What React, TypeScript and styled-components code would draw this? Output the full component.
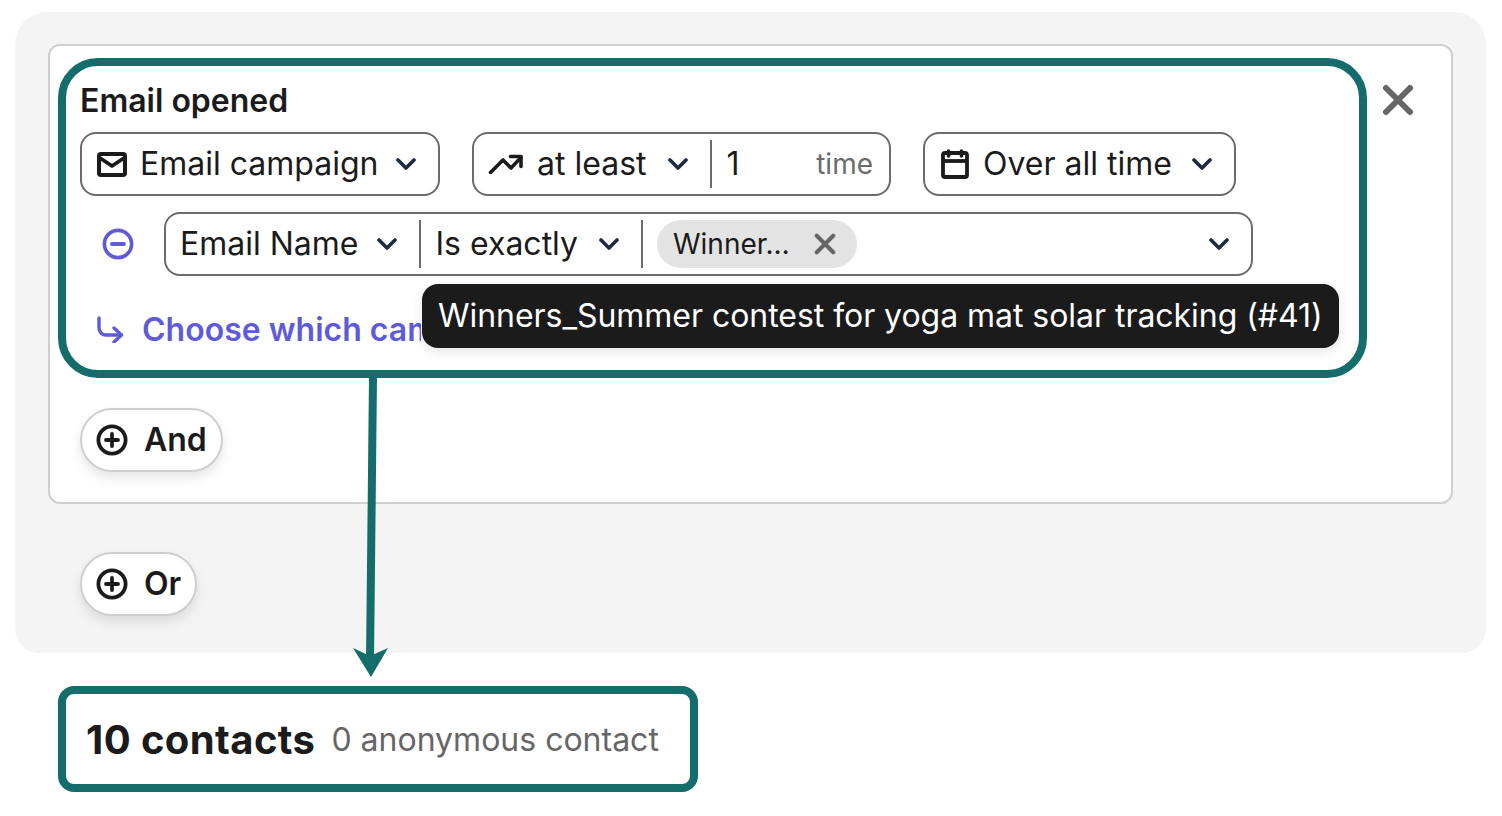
import React from 'react';
import styled, {createGlobalStyle} from 'styled-components';

const teal = '#146c6b';
const ink = '#1b1b1b';
const violet = '#5f5bd6';
const line = '#6b6b6b';
const navy = '#1c2b3f';

const GlobalStyle = createGlobalStyle`
  html, body {
    margin: 0;
    padding: 0;
    background: #fff;
  }
  body {
    font-family: Inter, "Liberation Sans", sans-serif;
    color: ${ink};
  }
`;

const Page = styled.div`
  position: relative;
  width: 1502px;
  height: 816px;
  padding: 12px 16px 0 15px;
  box-sizing: border-box;
  overflow: hidden;
`;

const Panel = styled.div`
  height: 641px;
  box-sizing: border-box;
  padding: 32px 33px 0;
  background: #f4f4f4;
  border-radius: 32px 32px 24px 24px;
`;

const Card = styled.div`
  position: relative;
  height: 460px;
  box-sizing: border-box;
  padding: 35px 30px 0;
  background: #fff;
  border: 2px solid #cfcfcf;
  border-radius: 12px;
`;

const Highlight = styled.div`
  position: absolute;
  left: 8px;
  top: 12px;
  width: 1309px;
  height: 320px;
  box-sizing: border-box;
  border: 8px solid ${teal};
  border-radius: 40px;
  pointer-events: none;
`;

const CloseButton = styled.div`
  position: absolute;
  left: 1332px;
  top: 38px;
  display: flex;
`;

const Title = styled.div`
  font-size: 32px;
  line-height: 40px;
  font-weight: 600;
`;

const Row = styled.div`
  display: flex;
  gap: 32px;
  margin-top: 11px;
`;

const FilterRow = styled.div`
  display: flex;
  align-items: center;
  margin-top: 16px;
  padding-left: 22px;
  gap: 30px;
`;

const Field = styled.div<{$width: number}>`
  display: flex;
  align-items: center;
  width: ${({$width}) => $width}px;
  height: 64px;
  box-sizing: border-box;
  padding: 0 14px;
  gap: 12px;
  background: #fff;
  border: 2px solid ${line};
  border-radius: 16px;
  font-size: 32px;
`;

const Label = styled.span<{$pad: number}>`
  margin-right: ${({$pad}) => $pad}px;
  padding-bottom: 2px;
  white-space: nowrap;
`;

const Divider = styled.span<{$after: number}>`
  flex: none;
  width: 2px;
  height: 48px;
  background: ${line};
  margin: 0 ${({$after}) => $after}px 0 10px;
`;

const Count = styled.span`
  flex: 1;
  padding-bottom: 2px;
`;

const Unit = styled.span`
  font-size: 28px;
  color: #6b6b6b;
  margin-right: 2px;
`;

const Chip = styled.span`
  display: flex;
  align-items: center;
  justify-content: space-between;
  width: 200px;
  height: 48px;
  box-sizing: border-box;
  padding: 0 21px 0 16px;
  background: #e3e3e3;
  border-radius: 24px;
  font-size: 28px;
  margin-left: 2px;
`;

const Spacer = styled.span`
  flex: 1;
`;

const LinkRow = styled.div`
  display: flex;
  align-items: center;
  gap: 18px;
  margin-top: 33px;
  padding-left: 16px;
  height: 40px;
  color: ${violet};
  font-size: 32px;
  font-weight: 600;
  white-space: nowrap;
`;

const LinkText = styled.span`
  width: 279px;
  overflow: hidden;
`;

const Tooltip = styled.div`
  position: absolute;
  left: 372px;
  top: 238px;
  display: flex;
  align-items: center;
  height: 64px;
  box-sizing: border-box;
  padding: 0 16px 1px;
  width: 917px;
  background: ${ink};
  color: #fff;
  border-radius: 16px;
  font-size: 32px;
  letter-spacing: -0.04px;
  white-space: nowrap;
  box-shadow: 0 4px 12px rgba(0, 0, 0, 0.1);
`;

const PillButton = styled.div`
  display: inline-flex;
  align-items: center;
  gap: 16px;
  height: 64px;
  box-sizing: border-box;
  padding: 0 14px;
  background: #fff;
  border: 2px solid #cfcfcf;
  border-radius: 32px;
  font-size: 32px;
  font-weight: 600;
  box-shadow: 0 6px 12px rgba(0, 0, 0, 0.1);
`;

const PillLabel = styled.span`
  padding-bottom: 2px;
`;

const AndButton = styled(PillButton)`
  margin-top: 59px;
`;

const OrButton = styled(PillButton)`
  margin: 48px 0 0 32px;
`;

const ContactsBox = styled.div`
  display: flex;
  align-items: center;
  width: 640px;
  height: 106px;
  box-sizing: border-box;
  margin: 33px 0 0 43px;
  padding: 0 20px;
  gap: 16px;
  background: #fff;
  border: 8px solid ${teal};
  border-radius: 16px;
  white-space: nowrap;
`;

const ContactCount = styled.span`
  font-size: 40px;
  font-weight: 700;
  letter-spacing: 0.4px;
`;

const Anonymous = styled.span`
  font-size: 32px;
  color: #666;
`;

const Connector = styled.svg`
  position: absolute;
  left: 340px;
  top: 370px;
`;

const ChevronMark = styled.svg<{$end?: number}>`
  flex: none;
  margin-right: ${({$end}) => $end ?? 0}px;
`;

const Chevron = ({end}: {end?: number}) => (
  <ChevronMark $end={end} width="20" height="12" viewBox="0 0 20 12" fill="none">
    <path d="M2 2l8 8 8-8" stroke={navy} strokeWidth="3.6" strokeLinecap="round" strokeLinejoin="round" />
  </ChevronMark>
);

const MailIcon = () => (
  <svg width="32" height="25" viewBox="-1 0 32 25" fill="none" style={{flex: 'none'}}>
    <rect x="2" y="2" width="26" height="21" rx="2" stroke={ink} strokeWidth="4" />
    <path d="M3 6l12 8 12-8" stroke={ink} strokeWidth="3.8" strokeLinejoin="round" />
  </svg>
);

const TrendIcon = () => (
  <svg width="37" height="20" viewBox="-1 0 37 20" fill="none" style={{flex: 'none'}}>
    <path d="M1.5 18.5L14 6l8 8L32 3.5" stroke={ink} strokeWidth="3.6" strokeLinecap="round" strokeLinejoin="round" />
    <path d="M21.5 2.5H32v10" stroke={ink} strokeWidth="3.6" strokeLinecap="round" strokeLinejoin="round" />
  </svg>
);

const CalendarIcon = () => (
  <svg width="32" height="30" viewBox="-2 0 32 30" fill="none" style={{flex: 'none'}}>
    <rect x="2" y="4" width="24" height="24" rx="2" stroke={ink} strokeWidth="3.8" />
    <path d="M2 12h24" stroke={ink} strokeWidth="3.8" />
    <path d="M7.5 2v5M20.5 2v5" stroke={ink} strokeWidth="3.6" strokeLinecap="round" />
  </svg>
);

const MinusCircle = () => (
  <svg width="32" height="32" viewBox="0 0 32 32" fill="none" style={{flex: 'none'}}>
    <circle cx="16" cy="16" r="13.6" stroke={violet} strokeWidth="3.6" />
    <path d="M10 16h12" stroke={violet} strokeWidth="3.8" strokeLinecap="round" />
  </svg>
);

const ReturnArrow = () => (
  <svg width="28" height="28" viewBox="0 0 28 28" fill="none" style={{flex: 'none'}}>
    <path d="M3 3v10a7 7 0 0 0 7 7h15" stroke={violet} strokeWidth="3.4" strokeLinecap="round" />
    <path d="M18 13l7.5 7-7.5 7" stroke={violet} strokeWidth="3.4" strokeLinecap="round" strokeLinejoin="round" />
  </svg>
);

const PlusCircle = () => (
  <svg width="32" height="32" viewBox="0 0 32 32" fill="none" style={{flex: 'none'}}>
    <circle cx="16" cy="16" r="13.6" stroke={ink} strokeWidth="3.8" />
    <path d="M16 10v12M10 16h12" stroke={ink} strokeWidth="3.8" strokeLinecap="round" />
  </svg>
);

const CrossIcon = ({size, weight}: {size: number; weight: number}) => (
  <svg width={size} height={size} viewBox="0 0 32 32" fill="none" style={{flex: 'none'}}>
    <path d="M4 4l24 24M28 4L4 28" stroke="#666" strokeWidth={weight} strokeLinecap="round" />
  </svg>
);

export default function App() {
  return (
    <Page>
      <GlobalStyle />
      <Panel>
        <Card>
          <Title>Email opened</Title>
          <Row>
            <Field $width={360}>
              <MailIcon />
              <Label $pad={6}>Email campaign</Label>
              <Chevron />
            </Field>
            <Field $width={419}>
              <TrendIcon />
              <Label $pad={10}>at least</Label>
              <Chevron />
              <Divider $after={2} />
              <Count>1</Count>
              <Unit>time</Unit>
            </Field>
            <Field $width={313}>
              <CalendarIcon />
              <Label $pad={8}>Over all time</Label>
              <Chevron />
            </Field>
          </Row>
          <FilterRow>
            <MinusCircle />
            <Field $width={1089}>
              <Label $pad={6}>Email Name</Label>
              <Chevron />
              <Divider $after={3} />
              <Label $pad={9}>Is exactly</Label>
              <Chevron />
              <Divider $after={0} />
              <Chip>
                Winner…
                <CrossIcon size={22} weight={6} />
              </Chip>
              <Spacer />
              <Chevron end={8} />
            </Field>
          </FilterRow>
          <LinkRow>
            <ReturnArrow />
            <LinkText>Choose which campaigns</LinkText>
          </LinkRow>
          <Tooltip>Winners_Summer contest for yoga mat solar tracking (#41)</Tooltip>
          <Highlight />
          <CloseButton>
            <CrossIcon size={32} weight={6} />
          </CloseButton>
          <AndButton>
            <PlusCircle />
            <PillLabel>And</PillLabel>
          </AndButton>
        </Card>
        <OrButton>
          <PlusCircle />
          <PillLabel>Or</PillLabel>
        </OrButton>
      </Panel>
      <ContactsBox>
        <ContactCount>10 contacts</ContactCount>
        <Anonymous>0 anonymous contact</Anonymous>
      </ContactsBox>
      <Connector width="60" height="320" viewBox="0 0 60 320" fill="none">
        <path d="M33 6L30 292" stroke={teal} strokeWidth="8" />
        <path d="M13 278l17 8 18-8-17 29z" fill={teal} />
      </Connector>
    </Page>
  );
}
